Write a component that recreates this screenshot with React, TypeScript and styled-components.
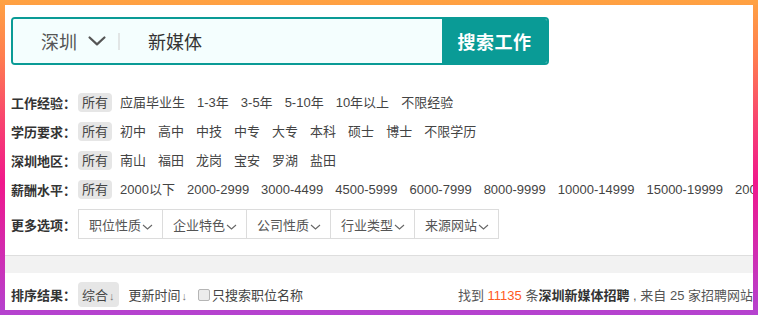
import React from 'react'
import styled, { createGlobalStyle } from 'styled-components'

const GlobalStyle = createGlobalStyle`
	html, body {
		margin: 0;
		padding: 0;
	}
	body {
		width: 758px;
		height: 315px;
		overflow: hidden;
		background: linear-gradient(180deg, #ffa242 0%, #ff7d4f 18%, #f8456f 38%, #f0188c 58%, #d12cb0 80%, #b443d0 100%);
		font-family: 'Liberation Sans', 'Noto Sans CJK SC', sans-serif;
	}
`

const TEAL = '#0a9b96'

const experience = ['应届毕业生', '1-3年', '3-5年', '5-10年', '10年以上', '不限经验']
const education = ['初中', '高中', '中技', '中专', '大专', '本科', '硕士', '博士', '不限学历']
const districts = ['南山', '福田', '龙岗', '宝安', '罗湖', '盐田']
const salaries = [
	'2000以下',
	'2000-2999',
	'3000-4499',
	'4500-5999',
	'6000-7999',
	'8000-9999',
	'10000-14999',
	'15000-19999',
	'20000以上',
]
const moreOptions = ['职位性质', '企业特色', '公司性质', '行业类型', '来源网站']

const filters = [
	{ label: '工作经验：', items: experience },
	{ label: '学历要求：', items: education },
	{ label: '深圳地区：', items: districts },
	{ label: '薪酬水平：', items: salaries },
]

const ChevronDown = ({ size = 18 }: { size?: number }) => (
	<svg width={size} height={size * 0.55} viewBox="0 0 18 10" fill="none">
		<path d="M1.5 1.5 L9 8.5 L16.5 1.5" stroke="#555" strokeWidth="2.2" strokeLinecap="round" strokeLinejoin="round" />
	</svg>
)

const SmallCaret = () => (
	<svg width="11" height="6" viewBox="0 0 11 6" fill="none">
		<path d="M1 1 L5.5 5 L10 1" stroke="#666" strokeWidth="1.1" />
	</svg>
)

const App = () => {
	return (
		<>
			<GlobalStyle />
			<Frame>
				<Top>
					<SearchBar>
						<InputArea>
							<City>深圳</City>
							<ChevronWrap>
								<ChevronDown />
							</ChevronWrap>
							<Divider />
							<Keyword>新媒体</Keyword>
						</InputArea>
						<SearchButton>搜索工作</SearchButton>
					</SearchBar>

					<Filters>
						{filters.map((f) => (
							<FilterRow key={f.label}>
								<Label>{f.label}</Label>
								<Option $active>所有</Option>
								{f.items.map((it) => (
									<Option key={it}>{it}</Option>
								))}
							</FilterRow>
						))}
						<MoreRow>
							<Label>更多选项：</Label>
							<DropGroup>
								{moreOptions.map((o) => (
									<DropItem key={o}>
										{o}
										<SmallCaret />
									</DropItem>
								))}
							</DropGroup>
						</MoreRow>
					</Filters>
				</Top>

				<Band />

				<SortRow>
					<Label>排序结果：</Label>
					<SortOption $active>
						综合<Arrow>↓</Arrow>
					</SortOption>
					<SortOption>
						更新时间<Arrow>↓</Arrow>
					</SortOption>
					<CheckLabel>
						<CheckBox />
						只搜索职位名称
					</CheckLabel>
					<Summary>
						找到 <Count>11135</Count> 条<strong>深圳新媒体招聘</strong> , 来自 25 家招聘网站
					</Summary>
				</SortRow>
			</Frame>
		</>
	)
}

const Frame = styled.div`
	margin: 5px;
	width: 748px;
	height: 305px;
	background: #fff;
	overflow: hidden;
	font-size: 13px;
	color: #444;
`
const Top = styled.div`
	padding: 12px 0 0 6px;
`
const SearchBar = styled.div`
	display: flex;
	width: 538px;
	height: 48px;
	box-sizing: border-box;
	border: 2px solid ${TEAL};
	border-radius: 4px;
	overflow: hidden;
`
const InputArea = styled.div`
	flex: 1;
	display: flex;
	align-items: center;
	padding-left: 28px;
	background: #f4fefe;
`
const City = styled.span`
	font-size: 18px;
	color: #555;
`
const ChevronWrap = styled.span`
	display: flex;
	margin-left: 11px;
`
const Divider = styled.span`
	width: 2px;
	height: 17px;
	margin-left: 12px;
	background: #e2e6e6;
`
const Keyword = styled.span`
	margin-left: 28px;
	font-size: 18px;
	color: #333;
`
const SearchButton = styled.div`
	width: 105px;
	display: flex;
	align-items: center;
	justify-content: center;
	background: ${TEAL};
	color: #fff;
	font-size: 18px;
	font-weight: bold;
	letter-spacing: 0.5px;
`
const Filters = styled.div`
	margin-top: 23px;
`
const FilterRow = styled.div`
	display: flex;
	align-items: center;
	height: 29px;
	white-space: nowrap;
`
const Label = styled.span`
	flex: none;
	width: 67px;
	font-weight: bold;
	color: #333;
`
const Option = styled.span<{ $active?: boolean }>`
	flex: none;
	height: 19px;
	line-height: 19px;
	padding: 0 4px;
	margin-right: 4px;
	border-radius: 4px;
	background: ${(p) => (p.$active ? '#e6e6e6' : 'transparent')};
	color: #444;
`
const MoreRow = styled.div`
	display: flex;
	align-items: center;
	height: 30px;
	margin-top: 5px;
`
const DropGroup = styled.div`
	display: flex;
	height: 30px;
	box-sizing: border-box;
	border: 1px solid #dcdcdc;
`
const DropItem = styled.div`
	display: flex;
	align-items: center;
	padding: 0 9px 0 10px;
	color: #555;
	border-right: 1px solid #dcdcdc;
	svg {
		margin: 5px 0 0 1px;
	}
	&:last-child {
		border-right: none;
	}
`
const Band = styled.div`
	margin-top: 16px;
	height: 17px;
	border-top: 1px solid #dedede;
	background: #f2f2f2;
`
const SortRow = styled.div`
	display: flex;
	align-items: center;
	height: 25px;
	margin-top: 9px;
	padding-left: 6px;
	white-space: nowrap;
`
const SortOption = styled.span<{ $active?: boolean }>`
	display: flex;
	align-items: center;
	height: 25px;
	padding: 0 4px;
	margin-right: 6px;
	border-radius: 4px;
	background: ${(p) => (p.$active ? '#e6e6e6' : 'transparent')};
	color: #444;
`
const Arrow = styled.span`
	font-size: 11px;
	color: #777;
	margin-left: 1px;
	transform: translateY(1px);
`
const CheckLabel = styled.label`
	display: flex;
	align-items: center;
	margin-left: 1px;
	color: #444;
`
const CheckBox = styled.span`
	width: 10px;
	height: 10px;
	margin-right: 2px;
	border: 1px solid #b5b5b5;
	border-radius: 2px;
	background: #ececec;
`
const Summary = styled.span`
	margin-left: auto;
	color: #555;
	strong {
		color: #333;
	}
`
const Count = styled.span`
	color: #ff5a22;
`

export default App
